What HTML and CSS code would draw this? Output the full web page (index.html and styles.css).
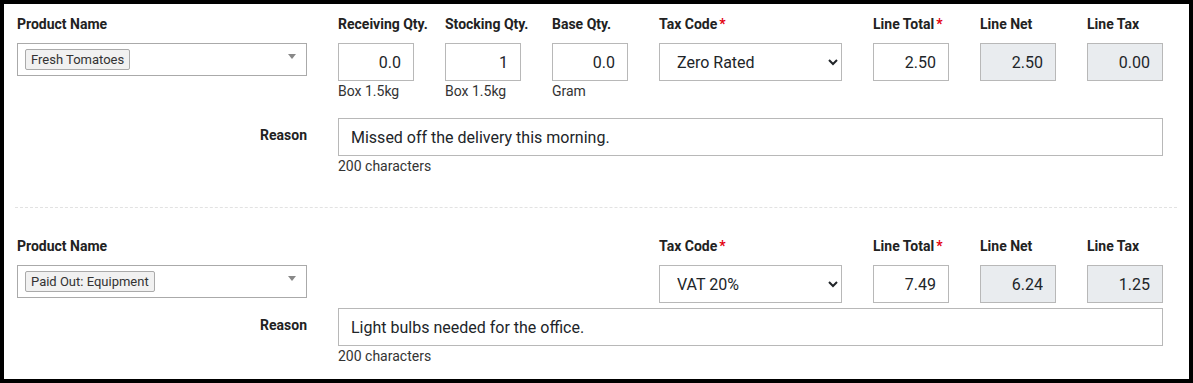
FILE: index.html
```html
<!DOCTYPE html>
<html lang="en">
<head>
    <meta charset="UTF-8">
    <meta name="viewport" content="width=device-width, initial-scale=1.0">
    <title>Purchase Lines</title>
    <link rel="stylesheet" href="styles.css">
</head>
<body>
    <div class="panel">
        <div class="line first">
            <div class="line-grid">
                <div class="field">
                    <label class="field-label">Product Name</label>
                    <div class="product-box">
                        <span class="product-tag">Fresh Tomatoes</span>
                        <span class="product-arrow"></span>
                    </div>
                </div>
                <div class="field">
                    <label class="field-label">Receiving Qty.</label>
                    <input type="text" class="num-input" value="0.0">
                    <div class="field-help">Box 1.5kg</div>
                </div>
                <div class="field">
                    <label class="field-label">Stocking Qty.</label>
                    <input type="text" class="num-input" value="1">
                    <div class="field-help">Box 1.5kg</div>
                </div>
                <div class="field">
                    <label class="field-label">Base Qty.</label>
                    <input type="text" class="num-input" value="0.0">
                    <div class="field-help">Gram</div>
                </div>
                <div class="field">
                    <label class="field-label">Tax Code<span class="req">*</span></label>
                    <select class="tax-select">
                        <option>Zero Rated</option>
                        <option>VAT 20%</option>
                    </select>
                </div>
                <div class="field">
                    <label class="field-label">Line Total<span class="req">*</span></label>
                    <input type="text" class="num-input" value="2.50">
                </div>
                <div class="field">
                    <label class="field-label">Line Net</label>
                    <input type="text" class="num-input readonly" value="2.50" readonly>
                </div>
                <div class="field">
                    <label class="field-label">Line Tax</label>
                    <input type="text" class="num-input readonly" value="0.00" readonly>
                </div>
            </div>
            <div class="reason-row has-help">
                <label class="reason-label">Reason</label>
                <div class="reason-field">
                    <input type="text" class="reason-input" value="Missed off the delivery this morning.">
                    <div class="field-help">200 characters</div>
                </div>
            </div>
        </div>

        <div class="line second">
            <div class="line-grid">
                <div class="field">
                    <label class="field-label">Product Name</label>
                    <div class="product-box">
                        <span class="product-tag">Paid Out: Equipment</span>
                        <span class="product-arrow"></span>
                    </div>
                </div>
                <div class="field"></div>
                <div class="field"></div>
                <div class="field"></div>
                <div class="field">
                    <label class="field-label">Tax Code<span class="req">*</span></label>
                    <select class="tax-select">
                        <option>VAT 20%</option>
                        <option>Zero Rated</option>
                    </select>
                </div>
                <div class="field">
                    <label class="field-label">Line Total<span class="req">*</span></label>
                    <input type="text" class="num-input" value="7.49">
                </div>
                <div class="field">
                    <label class="field-label">Line Net</label>
                    <input type="text" class="num-input readonly" value="6.24" readonly>
                </div>
                <div class="field">
                    <label class="field-label">Line Tax</label>
                    <input type="text" class="num-input readonly" value="1.25" readonly>
                </div>
            </div>
            <div class="reason-row">
                <label class="reason-label">Reason</label>
                <div class="reason-field">
                    <input type="text" class="reason-input" value="Light bulbs needed for the office.">
                    <div class="field-help">200 characters</div>
                </div>
            </div>
        </div>
    </div>
</body>
</html>
```

FILE: styles.css
```css
body {
    margin: 0;
    padding: 0;
    font-family: Roboto, 'Liberation Sans', sans-serif;
    color: #212529;
}

.panel {
    box-sizing: border-box;
    height: 383px;
    border: 4px solid #000;
    background: #fff;
    padding: 0 26px 0 13px;
}

.line.first {
    padding-top: 10px;
    padding-bottom: 31px;
    border-bottom: 1px dashed #e2e2e2;
    margin: 0 -14px 0 -2px;
    padding-left: 2px;
    padding-right: 14px;
}

.line.second {
    padding-top: 28px;
}

.line-grid {
    display: grid;
    grid-template-columns: 290px 76px 76px 76px 183px 76px 76px 76px;
    column-gap: 31px;
    align-items: start;
}

.field {
    display: flex;
    flex-direction: column;
}

.field-label {
    display: block;
    font-size: 14px;
    font-weight: 700;
    line-height: 20px;
    height: 20px;
    margin-bottom: 9px;
    color: #222;
    white-space: nowrap;
}

.req {
    color: #e3000f;
    margin-left: 2px;
}

.product-box {
    box-sizing: border-box;
    height: 33px;
    border: 1px solid #aaa;
    padding: 5px 7px 0 7px;
    display: flex;
    justify-content: space-between;
    align-items: flex-start;
}

.product-tag {
    box-sizing: border-box;
    height: 21px;
    line-height: 19px;
    padding: 0 5px;
    font-size: 13px;
    color: #333;
    background: #f1f1f1;
    border: 1px solid #aaa;
    border-radius: 2px;
}

.product-arrow {
    width: 0;
    height: 0;
    margin-top: 5px;
    margin-right: 3px;
    border-style: solid;
    border-width: 5px 4px 0 4px;
    border-color: #888 transparent transparent transparent;
}

.num-input,
.reason-input,
.tax-select {
    box-sizing: border-box;
    height: 38px;
    border: 1px solid #b8b8b8;
    border-radius: 0;
    font-family: Roboto, 'Liberation Sans', sans-serif;
    font-size: 16px;
    color: #212529;
    background: #fff;
    outline: none;
    margin: 0;
}

.num-input {
    width: 76px;
    text-align: right;
    padding: 0 12px;
}

.num-input.readonly {
    background: #e9ecef;
}

.tax-select {
    width: 183px;
    padding: 0 8px 0 13px;
}

.field-help {
    font-size: 14px;
    line-height: 20px;
    color: #333;
}

.reason-row {
    display: grid;
    grid-template-columns: 290px 1fr;
    column-gap: 31px;
    margin-top: 5px;
}

.reason-row.has-help {
    margin-top: 17px;
}

.reason-label {
    text-align: right;
    font-size: 14px;
    font-weight: 700;
    line-height: 20px;
    padding-top: 7px;
    color: #222;
}

.reason-field {
    display: flex;
    flex-direction: column;
}

.reason-input {
    width: 100%;
    padding: 0 12px;
}
```
